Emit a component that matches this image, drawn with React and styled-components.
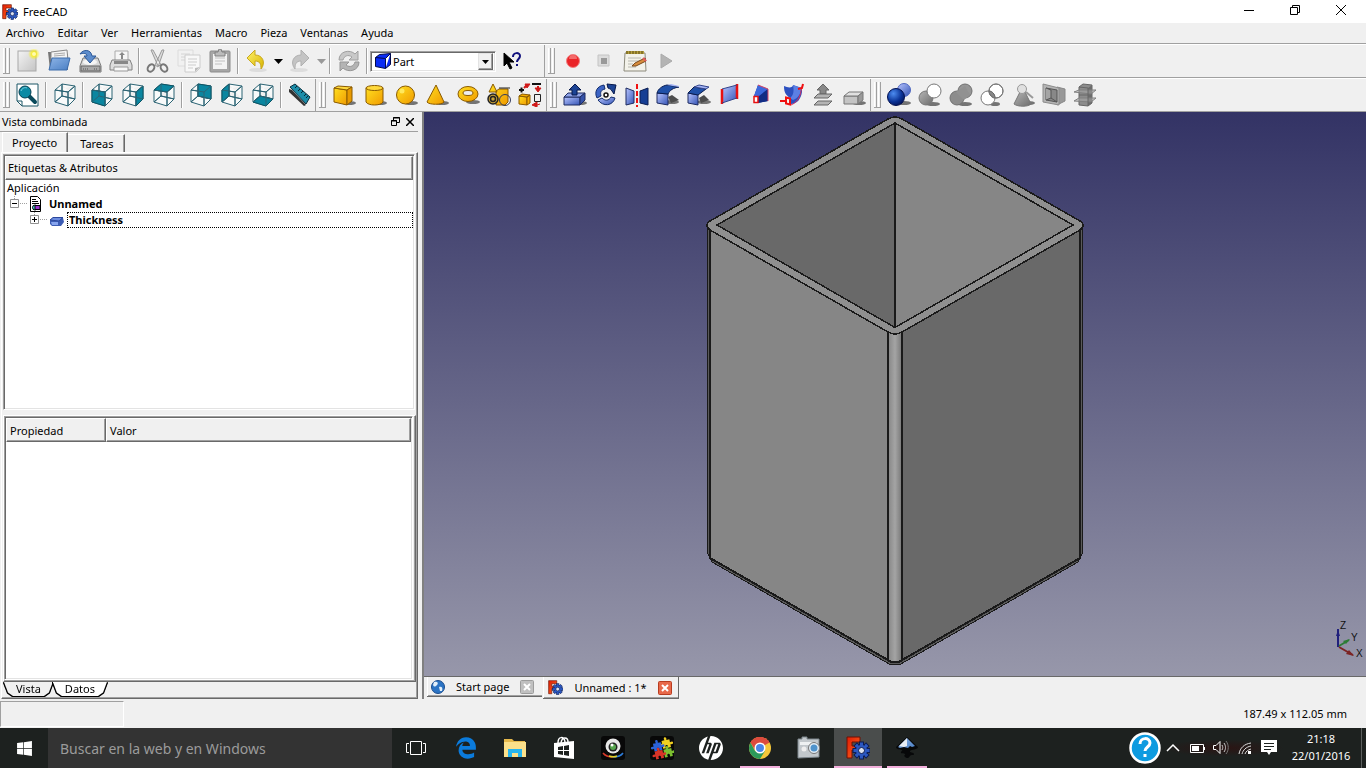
import React from 'react'
import styled, { createGlobalStyle, css } from 'styled-components'
import { FaWindows, FaEdgeLegacy } from 'react-icons/fa'
import { SiHp } from 'react-icons/si'

// css
const GlobalStyle = createGlobalStyle`
  * { box-sizing: border-box; }
  html, body { margin: 0; padding: 0; background: #f0f0f0; }
  body, button, input, select, table {
    font-family: "Noto Sans", "Open Sans", sans-serif;
    font-size: 11px;
    color: #000;
  }
  button { border: 0; padding: 0; background: none; }
  svg { display: block; flex: none; }
`

const Window = styled.div`
  min-height: 100vh;
  display: flex;
  flex-direction: column;
`

const TitleBar = styled.header`
  height: 23px;
  display: flex;
  align-items: center;
  background: #fff;
  padding: 0 2px;

  h1 {
    flex: 1;
    margin: 0;
    padding-left: 5px;
    font-size: 11px;
    font-weight: 400;
  }
`

const WindowButton = styled.button`
  align-self: flex-start;
  width: 46px;
  height: 20px;
  display: grid;
  place-items: center;
`

const MenuBar = styled.nav`
  height: 21px;
  display: flex;
  align-items: center;
  border-bottom: 1px solid #a0a0a0;

  button { padding: 0 7px 0 6px; line-height: 16px; }
`

const ToolBar = styled.div`
  height: 34px;
  display: flex;
  border-top: 1px solid #fff;
  border-bottom: 1px solid #a0a0a0;
`

const ToolGroup = styled.div`
  display: flex;
  align-items: center;
  padding-right: ${p => p.$end}px;
  border-right: ${p => (p.$last ? 0 : 1)}px solid #a0a0a0;
`

const Handle = styled.span`
  width: 7px;
  height: 26px;
  margin: 0 2px 0 3px;
  border: solid #a0a0a0;
  border-width: 0 1px 1px 0;
  background: linear-gradient(90deg, #fff 1px, #f0f0f0 1px 2px, #a0a0a0 2px 3px, #f0f0f0 3px 4px, #fff 4px 5px, #f0f0f0 5px);
`

const ToolButton = styled.button`
  width: ${p => (p.$arrow ? 12 : 31)}px;
  height: 30px;
  display: grid;
  place-items: center;
`

const Separator = styled.span`
  width: 2px;
  height: 26px;
  margin: 0 2px;
  border-left: 1px solid #a0a0a0;
  border-right: 1px solid #fff;
`

const sunken = css`
  border: 1px solid;
  border-color: #a0a0a0 #fff #fff #a0a0a0;
  box-shadow: inset 1px 1px #696969, inset -1px -1px #e3e3e3;
`

const Combo = styled.label`
  ${sunken}
  width: 126px;
  height: 21px;
  display: flex;
  align-items: center;
  padding: 2px 2px 2px 4px;
  background: #fff;

  select {
    flex: 1;
    appearance: none;
    border: 0;
    padding: 0 0 0 2px;
    background: transparent;
    outline: 0;
  }
`

const ComboArrow = styled.span`
  width: 15px;
  height: 17px;
  display: grid;
  place-items: center;
  pointer-events: none;
  background: #f0f0f0;
  border: 1px solid;
  border-color: #e3e3e3 #696969 #696969 #e3e3e3;
  box-shadow: inset -1px -1px #a0a0a0;
`

const Workspace = styled.main`
  flex: 1;
  display: flex;
  min-height: 400px;
`

const Dock = styled.aside`
  width: 418px;
  display: flex;
  flex-direction: column;
`

const DockTitle = styled.div`
  height: 20px;
  display: flex;
  align-items: center;
  gap: 1px;
  padding: 0 1px 0 2px;
  border-bottom: 1px solid #a0a0a0;

  span { flex: 1; }
  button { width: 14px; height: 14px; display: grid; place-items: center; }
`

const TopTabs = styled.div`
  display: flex;
  align-items: flex-end;
  height: 20px;
  padding-left: 2px;
`

const TopTab = styled.button`
  height: ${p => (p.$active ? 20 : 18)}px;
  padding: 0 10px 0 ${p => (p.$active ? 9 : 12)}px;
  border-top: 1px solid #fff;
  border-left: ${p => (p.$active ? 1 : 0)}px solid #fff;
  border-right: 1px solid #696969;
  box-shadow: inset -1px 0 #a0a0a0;
`

const Pane = styled.section`
  flex: 1;
  display: flex;
  flex-direction: column;
  margin-left: 1px;
  padding: 1px 1px 0 1px;
  border: 1px solid;
  border-color: #fff #696969 #696969 #fff;
  box-shadow: inset -1px -1px #a0a0a0;
`

const Tree = styled.div`
  ${sunken}
  height: 256px;
  margin-right: 1px;
  padding: 1px;
  background: #fff;

  ul { list-style: none; margin: 0; padding: 0; }
  li { line-height: 16px; }
`

const raised = css`
  background: #f0f0f0;
  border: 1px solid;
  border-color: #fff #696969 #696969 #fff;
  box-shadow: inset -1px -1px #a0a0a0;
`

const TreeHeader = styled.div`
  ${raised}
  height: 24px;
  padding-left: 2px;
  line-height: 22px;
`

const TreeRow = styled.div`
  display: flex;
  align-items: center;
  height: 16px;
  padding-left: ${p => p.$indent}px;
  font-weight: ${p => (p.$bold ? 700 : 400)};
`

const TreeLabel = styled.span`
  flex: ${p => (p.$focus ? 1 : 'none')};
  height: 16px;
  line-height: 14px;
  margin-left: ${p => (p.$focus ? 3 : 5)}px;
  padding-left: 1px;
  border: 1px ${p => (p.$focus ? 'dotted #000' : 'solid transparent')};
`

const PropertyPane = styled.div`
  flex: 1;
  display: flex;
  flex-direction: column;
  margin-top: 5px;
  padding: 0 2px 1px 0;
  border: 1px solid;
  border-color: #fff #696969 #696969 #fff;
  box-shadow: inset -1px -1px #a0a0a0;
`

const PropertyFrame = styled.div`
  ${sunken}
  flex: 1;
  padding: 1px;
  background: #fff;
`

const PropertyTable = styled.table`
  width: 100%;
  border-collapse: separate;
  border-spacing: 0;

  th {
    ${raised}
    height: 24px;
    padding: 0 3px;
    font-weight: 400;
    text-align: left;
  }
  th:first-child { width: 100px; }
`

const BottomTabs = styled.div`
  height: 16px;
  display: flex;
  padding-left: 1px;
`

const BottomTab = styled.button`
  height: 14px;
  padding: 0 12px;
  line-height: 12px;
  background: ${p => (p.$active ? '#fff' : '#f0f0f0')};
  clip-path: polygon(0 0, 100% 0, calc(100% - 4px) 75%, calc(100% - 9px) 100%, 9px 100%, 4px 75%);
`

const BottomTabEdge = styled.span`
  display: flex;
  filter: drop-shadow(0 1px #000) drop-shadow(1px 0 #000) drop-shadow(-1px 0 #000);
`

const Mdi = styled.div`
  flex: 1;
  display: flex;
  flex-direction: column;
  margin-left: 4px;
  border-left: 2px solid #808080;
`

const Viewport = styled.div`
  flex: 1;
  display: flex;
  background: linear-gradient(#333365, #9797aa);
  border-bottom: 1px solid #696969;

  svg { flex: 1; width: 100%; min-width: 0; }
`

const DocTabs = styled.div`
  height: 22px;
  display: flex;
  align-items: flex-start;
  padding-left: 3px;
`

const DocTab = styled.div`
  height: ${p => (p.$active ? 22 : 20)}px;
  display: flex;
  align-items: center;
  padding: 0 ${p => (p.$active ? 6 : 8)}px 0 ${p => (p.$active ? 5 : 4)}px;
  border: solid #696969;
  border-width: 0 ${p => (p.$active ? 1 : 0)}px 1px 0;
  box-shadow: inset 1px 0 #fff, inset 0 -1px #a0a0a0;
  margin-right: 1px;

  > button:first-of-type { margin: 0 11px; }
`

const StatusBar = styled.footer`
  height: 29px;
  display: flex;
  align-items: center;
  justify-content: space-between;
  padding-right: 19px;
`

const StatusBox = styled.span`
  width: 124px;
  height: 26px;
  border: 1px solid;
  border-color: #a0a0a0 #fff #fff #a0a0a0;
`

const TaskBar = styled.footer`
  height: 40px;
  display: flex;
  background: #1d211f;
`

const Search = styled.input`
  width: 344px;
  height: 40px;
  border: 0;
  padding: 0 12px;
  background: #333;
  font-size: 14px;

  &::placeholder { color: #9b9b9b; opacity: 1; }
`

const TaskButton = styled.button`
  width: 48px;
  height: 40px;
  display: grid;
  place-items: center;
  background: ${p => (p.$active ? '#4a4d4c' : 'transparent')};
  color: ${p => p.$color || '#fff'};
`

const Apps = styled.div`
  flex: 1;
  display: flex;
  gap: 1px;
  padding-left: 2px;

  ${TaskButton}.running {
    background-image: linear-gradient(#f3b0dc, #f3b0dc);
    background-size: 40px 2px;
    background-position: bottom;
    background-repeat: no-repeat;
  }
  ${TaskButton}.current { background-size: 100% 2px; }
`

const Tray = styled.div`
  display: flex;
  align-items: center;
  background: radial-gradient(ellipse at 40% 50%, #2b1413 0, #1d211f 30%);

  button { height: 40px; display: grid; place-items: center; }
`

const Clock = styled.time`
  width: 81px;
  margin-right: 4px;
  border-right: 1px solid #5c5f5e;
  height: 40px;
  padding-top: 2px;
  color: #fff;
  line-height: 17px;
  text-align: center;
`

// shared gradients
const Gradients = () => (
  <svg width="0" height="0" style={{ position: 'absolute' }} aria-hidden="true">
    <defs>
      {[
        ['gold', '#ffdf20', '#f09a00'],
        ['blue', '#b9c6ff', '#3353b5'],
        ['navy', '#3d6fe0', '#04186c'],
        ['grey', '#b5b5b5', '#6c6c6c'],
        ['pale', '#f4f4f4', '#c4c4c4'],
        ['sky', '#8db4e6', '#4a7fc4'],
        ['yellow', '#fff26a', '#d8b400'],
        ['ember', '#e01c04', '#ff6a20'],
      ].map(([id, a, b]) => (
        <linearGradient key={id} id={id} x1="0" y1="0" x2="1" y2="1">
          <stop offset="0" stopColor={a} />
          <stop offset="1" stopColor={b} />
        </linearGradient>
      ))}
      <radialGradient id="glow">
        <stop offset="0.2" stopColor="#fff200" />
        <stop offset="1" stopColor="#fff200" stopOpacity="0" />
      </radialGradient>
      <radialGradient id="ball" cx="0.35" cy="0.3" r="0.8">
        <stop offset="0" stopColor="#4d8cf0" />
        <stop offset="0.6" stopColor="#0a3296" />
        <stop offset="1" stopColor="#021050" />
      </radialGradient>
      <linearGradient id="fillet">
        <stop offset="0" stopColor="#868686" />
        <stop offset="0.5" stopColor="#a4a4a4" />
        <stop offset="1" stopColor="#777" />
      </linearGradient>
    </defs>
  </svg>
)

const Icon = ({ size = 24, box = 24, children }) => (
  <svg width={size} height={size} viewBox={`0 0 ${box} ${box}`} fill="none" aria-hidden="true">
    {children}
  </svg>
)

const FreeCadIcon = ({ size = 16 }) => (
  <Icon size={size}>
    <path d="M1 1h13v5H6v4h5v4H6v8H1z" fill="url(#ember)" stroke="#6c1004" />
    <g transform="translate(15.500 14.500)">
      {[0, 45, 90, 135].map(a => (
        <rect key={a} x="-2" y="-8.500" width="4" height="17" transform={`rotate(${a})`} fill="#2c58c0" stroke="#0c1c54" />
      ))}
      <circle r="6" fill="#2c58c0" stroke="#0c1c54" />
      {[0, 45, 90, 135].map(a => (
        <rect key={a} x="-1.500" y="-7.500" width="3" height="15" transform={`rotate(${a})`} fill="#2c58c0" />
      ))}
      <circle r="3" fill="#dfe4ee" stroke="#0c1c54" />
    </g>
  </Icon>
)

const cubeFaces = {
  front: '2,7 15,9 15,23 2,19',
  right: '15,9 22,3 22,16 15,23',
  top: '2,7 9,1 22,3 15,9',
  rear: '9,1 22,3 22,16 9,13',
  left: '2,7 9,1 9,13 2,19',
  bottom: '2,19 9,13 22,16 15,23',
}

const CubeIcon = ({ face }) => (
  <Icon>
    <path d="M2 7L15 9V23L2 19ZM15 9L22 3V16L15 23M2 7L9 1L22 3M9 1V13L22 16M9 13L2 19" fill="#f8fafa" stroke="#2c6474" />
    {face && <polygon points={cubeFaces[face]} fill="#0a86a0" stroke="#0d5464" />}
    <path d="M2 7L15 9V23M15 9L22 3M9 1V13L22 16M9 13L2 19" stroke="#2c6474" />
  </Icon>
)

const Shadow = ({ cx = 17, cy = 20, rx = 7, ry = 2 }) => (
  <ellipse cx={cx} cy={cy} rx={rx} ry={ry} fill="#555" opacity="0.8" />
)

const icons = {
  nuevo: <Icon>
    <rect x="2" y="2" width="18" height="20" fill="url(#pale)" stroke="#a8a8a8" />
    <circle cx="18" cy="5" r="6" fill="url(#glow)" /><circle cx="18" cy="5" r="2" fill="#fffbb0" />
  </Icon>,
  abrir: <Icon>
    <path d="M1 3h7l1 2h12v16H3z" fill="#777" />
    <path d="M4 3l16-2 1 10H4z" fill="#f4f4f4" stroke="#888" /><path d="M7 5l11-1M7 7l11-1" stroke="#aaa" />
    <path d="M5 9h18l-3 12H2z" fill="url(#sky)" stroke="#3c6cab" />
  </Icon>,
  guardar: <Icon>
    <path d="M5 9h15l3 8v6H2v-6z" fill="#d8d8d8" stroke="#777" /><path d="M3 17h19v5H3z" fill="#a9a9a9" stroke="#666" />
    <ellipse cx="12" cy="13" rx="7" ry="3" fill="#f5f5f5" /><path d="M5 20h6M16 20h4" stroke="#555" strokeDasharray="1 1" />
    <path d="M2 5C5 0 13 0 14 7h4l-6 7-6-7h3C9 4 5 4 2 5z" fill="#5c8ccc" stroke="#2c5898" />
  </Icon>,
  imprimir: <Icon>
    <path d="M6 2h13v10H6z" fill="#f6f6f6" stroke="#aaa" /><path d="M12 10V6h-2l3-3 3 3h-2v4z" fill="#888" />
    <path d="M3 11h18l2 5v5H1v-5z" fill="#ddd" stroke="#808080" /><path d="M5 12h14v3H5z" fill="#888" />
    <path d="M5 18h14v4H5z" fill="#f8f8f8" stroke="#999" />
  </Icon>,
  cortar: <Icon>
    <path d="M5 1l2 0 8 15-3 1zM18 1h-2L9 16l3 2z" fill="#dcdcdc" stroke="#999" />
    <ellipse cx="5" cy="19" rx="3" ry="4" transform="rotate(35 5 19)" stroke="#777" strokeWidth="2" />
    <ellipse cx="18" cy="19" rx="3" ry="4" transform="rotate(-35 18 19)" stroke="#777" strokeWidth="2" />
  </Icon>,
  copiar: <Icon>
    <path d="M1 1h15v16H1z" fill="#f1f1f1" stroke="#dcdcdc" /><path d="M4 5h9M4 8h5M4 11h4" stroke="#d4d4d4" />
    <path d="M8 6h15v13l-4 4H8z" fill="#f8f8f8" stroke="#ccc" /><path d="M11 10h9M11 13h9M11 16h8M11 19h5" stroke="#ccc" />
    <path d="M23 18l-5 5v-4z" fill="#bbb" />
  </Icon>,
  pegar: <Icon>
    <rect x="2" y="2" width="20" height="21" rx="1" fill="#a6a6a6" stroke="#8c8c8c" />
    <path d="M5 5h14v15H5z" fill="#f3f3f3" /><path d="M7 9h10M7 12h10M7 15h7" stroke="#c0c0c0" />
    <path d="M7 3h3l1-3h2l1 3h3v4H7z" fill="#bbb" stroke="#808080" />
  </Icon>,
  deshacer: <Icon>
    <ellipse cx="13" cy="21" rx="9" ry="2" fill="#ddd" />
    <path d="M2 9l8-8v5c8 0 11 8 6 14 0-5-1-8-6-8v5z" fill="url(#yellow)" stroke="#c8a820" />
  </Icon>,
  rehacer: <Icon>
    <ellipse cx="11" cy="21" rx="9" ry="2" fill="#ddd" />
    <path d="M21 9l-8-8v5C5 6 2 14 7 20c0-5 1-8 6-8v5z" fill="#c4c4c4" stroke="#b0b0b0" />
  </Icon>,
  flecha: <Icon size={9} box={9}><path d="M0 2h9L4.500 7z" fill="#000" /></Icon>,
  flechaGris: <Icon size={9} box={9}><path d="M0 2h9L4.500 7z" fill="#999" /></Icon>,
  refrescar: <Icon>
    <path d="M2 11C2 2 13 0 18 5l3-3v9h-9l3-3C11 5 7 7 6 11z" fill="#c8c8c8" stroke="#a0a0a0" />
    <path d="M22 13c0 9-11 11-16 6l-3 3v-9h9l-3 3c4 3 8 1 9-3z" fill="#b4b4b4" stroke="#969696" />
  </Icon>,
  ayuda: <Icon size={20} box={20}>
    <path d="M2 2v13l3-3 3 6 2-1-3-6h5z" fill="#000" stroke="#000" />
    <path d="M11 6c0-5 7-5 7-1 0 3-3 3-3 6M15 13v2" stroke="#10107c" strokeWidth="2" />
  </Icon>,
  grabar: <Icon><circle cx="12" cy="12" r="6.500" fill="#ea2428" stroke="#f28080" /><path d="M8 10a4 4 0 018 0z" fill="#f46a6a" /></Icon>,
  parar: <Icon><path d="M6 6h11v11H6z" fill="#ddd" stroke="#c4c4c4" /><path d="M9 9h6v6H9z" fill="#999" /></Icon>,
  macro: <Icon>
    <path d="M2 4h20l1 18H1z" fill="#f3f2ea" stroke="#8c8a7c" /><path d="M3 2h18v3H3z" fill="#b5a040" /><path d="M4 2v3M7 2v3M10 2v3M13 2v3M16 2v3M19 2v3" stroke="#5a4a10" />
    <path d="M5 9h13M5 12h12M5 15h5M5 18h8" stroke="#b8b8b0" />
    <path d="M9 17l3-3 10-5 1 3-10 5z" fill="#d88d3c" stroke="#7a4a1c" /><path d="M20 9l3 3" stroke="#e35b60" strokeWidth="2" />
  </Icon>,
  ejecutar: <Icon><path d="M7 5l11 7-11 7z" fill="#b4b4b4" stroke="#aaa" /></Icon>,
  ajustar: <Icon>
    <path d="M1 1h21v22H6l-5-5z" fill="#fff" stroke="#1c5666" /><path d="M1 18h5v5" stroke="#1c5666" />
    <path d="M13 13l6 6" stroke="#0a4a5c" strokeWidth="4" strokeLinecap="round" />
    <circle cx="9" cy="9" r="6" fill="#0a8aa4" stroke="#073f50" /><path d="M5 8c1-3 4-4 6-3" stroke="#7fd0e0" />
  </Icon>,
  medir: <Icon>
    <path d="M1 6l3 1 14 15-2 1L1 9z" fill="#333" /><path d="M2 4L7 1l15 13-4 7z" fill="#1c8ca8" stroke="#0a2e3c" />
    <path d="M9 3L7 5M12 6l-2 2M15 8l-2 2M18 11l-2 2M20 13l-2 2" stroke="#062836" />
  </Icon>,
  caja: <Icon>
    <Shadow cx={17} /><path d="M2 5l13 2v15L2 19z" fill="url(#gold)" stroke="#8a5a00" />
    <path d="M2 5l4-2 14 1-5 3z" fill="#ffd93c" stroke="#8a5a00" /><path d="M15 7l5-3v14l-5 4z" fill="#e89a00" stroke="#8a5a00" />
  </Icon>,
  cilindro: <Icon>
    <Shadow /><path d="M3 5v14c2 4 15 4 17 0V5z" fill="url(#gold)" stroke="#8a5a00" /><ellipse cx="11.500" cy="5" rx="8.500" ry="2.500" fill="#ffd93c" stroke="#8a5a00" />
  </Icon>,
  esfera: <Icon><Shadow /><circle cx="11.500" cy="12" r="9" fill="url(#gold)" stroke="#8a5a00" /><circle cx="8" cy="8" r="2.500" fill="#fff070" opacity="0.8" /></Icon>,
  cono: <Icon><Shadow /><path d="M11 2l8 17c-2 3-15 3-17 0z" fill="url(#gold)" stroke="#8a5a00" /></Icon>,
  toro: <Icon>
    <Shadow cy={19} /><ellipse cx="12" cy="11" rx="10" ry="7.500" fill="url(#gold)" stroke="#8a5a00" />
    <ellipse cx="12" cy="10" rx="5" ry="2.500" fill="#eee" stroke="#8a5a00" />
  </Icon>,
  primitivas: <Icon>
    <path d="M6 1l4 8H2zM9 8l3-2h9v13l-3 3H9z" fill="url(#gold)" stroke="#8a5a00" /><path d="M12 5h11" stroke="#222" />
    <circle cx="6" cy="16" r="5" fill="#c9a33a" stroke="#222" strokeWidth="1.500" /><circle cx="6" cy="16" r="2.500" stroke="#222" strokeWidth="1.500" /><circle cx="18" cy="17" r="5.500" stroke="#333a5c" />
  </Icon>,
  constructor: <Icon>
    <path d="M1 13l8 1v8l-8-1z" fill="url(#gold)" stroke="#8a5a00" /><path d="M1 13l3-2 8 1-3 2zM9 14l3-2v8l-3 2z" fill="#f4ac00" stroke="#8a5a00" />
    <path d="M1 7h5M3.500 4.500v5" stroke="#111" strokeWidth="2" /><path d="M14 1h9" stroke="#111" strokeWidth="2" /><path d="M16.500 11.500h6v7h-6z" stroke="#222" />
    <path d="M6 5l3-3M20 3v3" stroke="#d01818" strokeWidth="2" />
    <path d="M7 1h5l-3 4zM17 5h6l-3 4zM19 19v5l-5-2zM19 22l3-1" fill="#d01818" stroke="#d01818" />
  </Icon>,
  extruir: <Icon>
    <Shadow /><path d="M1 14h16v8H1z" fill="url(#blue)" stroke="#1c2a60" /><path d="M1 14l4-4h17l-5 4z" fill="#90a4e8" stroke="#1c2a60" /><path d="M17 14l5-4v7l-5 5z" fill="#3552a8" stroke="#1c2a60" />
    <path d="M9 12V7H6l6-6 6 6h-4v5z" fill="#1c4494" stroke="#06184c" />
  </Icon>,
  revolucion: <Icon>
    <path d="M10 2C3 3 0 9 3 15l4-2c-1-4 0-6 4-7z" fill="#3c64c4" stroke="#122c6c" /><path d="M4 17c5 7 15 6 17-2l-4-1c-2 4-6 4-9 1z" fill="url(#blue)" stroke="#122c6c" />
    <path d="M13 1l9 1-2 9-2-3c-1-2-2-2-4-3z" fill="#1c4494" stroke="#06184c" /><circle cx="12" cy="12" r="2" fill="#fff" stroke="#111" strokeWidth="1.500" />
  </Icon>,
  simetria: <Icon>
    <path d="M1 5l8 3v12l-8 2z" fill="url(#blue)" stroke="#1c2a60" /><path d="M23 5l-8 3v12l8 2z" fill="#163e94" stroke="#0a1c50" />
    <path d="M12 1v23" stroke="#f01010" strokeWidth="2" strokeDasharray="5 2" />
  </Icon>,
  redondeo: <Icon>
    <Shadow cx={16} cy={19} /><path d="M1 10l11 1v11L1 20z" fill="url(#blue)" stroke="#1c2a60" />
    <path d="M1 10C2 6 6 3 11 2l12 2c-6 1-9 3-11 7z" fill="#1f50a8" stroke="#091c50" /><path d="M11 2l4-1 8 2v1z" fill="#a3b3f4" /><path d="M12 14l4-2 7 5-8 3z" fill="#4c4c4c" />
  </Icon>,
  chaflan: <Icon>
    <Shadow cx={17} cy={19} /><path d="M1 10l10 2v10L1 20z" fill="url(#blue)" stroke="#1c2a60" />
    <path d="M1 10l6-6 12 2-8 6z" fill="#1f50a8" stroke="#091c50" /><path d="M7 4l5-2 10 2-3 2z" fill="#a3b3f4" stroke="#33458c" /><path d="M12 15l5-3 5 5-8 3z" fill="#4c4c4c" />
  </Icon>,
  regla: <Icon><path d="M4 6l15-4v13L4 20z" fill="url(#blue)" /><path d="M4 6v15M19 1v15" stroke="#e81010" strokeWidth="2.500" /><path d="M4 6l15-4M4 20l15-5" stroke="#33458c" /></Icon>,
  puente: <Icon>
    <path d="M5 13L9 2l10 4v12L9 20z" fill="#1c3ca4" /><path d="M9 2l10 4-10 8-4-1z" fill="#3c68dc" /><path d="M9 14l10-8v12L9 20z" fill="#122c84" />
    <path d="M9 2l10 4v12" stroke="#d84868" /><path d="M5 13.500h4v6H5z" fill="#fff" stroke="#e81010" strokeWidth="1.500" />
  </Icon>,
  barrido: <Icon>
    <path d="M4 3c0 7 2 9 6 12l1 6c6 0 10-5 11-12V5L13 2C13 5 8 5 4 3z" fill="#2c50c0" /><path d="M13 2l8 3c0 6-3 10-8 12l-3-2c4-3 4-8 3-13z" fill="#5c80e4" />
    <path d="M23 1l-2 7c-1 7-5 12-10 14" stroke="#d8305c" /><path d="M0 18h7M6 14.500l4 1v6l-4-1zM18 6l4-1 1-4" stroke="#f01010" strokeWidth="2" />
  </Icon>,
  desfase: <Icon><path d="M9 11V7H6l6-6 6 6h-3v4z" fill="#888" stroke="#666" /><path d="M7 11h14l-4 4H3zM7 18h14l-4 4H3z" fill="#b4b4b4" stroke="#666" /></Icon>,
  espesor: <Icon>
    <Shadow cx={17} /><path d="M2 13h14v8H2z" fill="#c4c4c4" stroke="#777" /><path d="M2 13l5-4h14l-5 4z" fill="#e0e0e0" stroke="#777" /><path d="M16 13l5-4v8l-5 4z" fill="#999" stroke="#777" />
  </Icon>,
  booleana: <Icon><Shadow /><circle cx="17" cy="7" r="6.500" fill="url(#blue)" stroke="#5068c0" /><circle cx="9" cy="14" r="8.500" fill="url(#ball)" stroke="#021050" /></Icon>,
  cortarPieza: <Icon><Shadow cx={15} cy={21} /><circle cx="8" cy="15" r="7" fill="url(#grey)" stroke="#777" /><circle cx="16" cy="8" r="7" fill="#fff" stroke="#777" /></Icon>,
  union: <Icon><Shadow cx={16} cy={21} /><circle cx="16" cy="8" r="7" fill="#969696" stroke="#707070" /><circle cx="8" cy="15" r="7" fill="#8c8c8c" stroke="#707070" /><path d="M7 9l9-6 5 9-6 5z" fill="#919191" /></Icon>,
  interseccion: <Icon>
    <Shadow cx={15} cy={21} rx={5} /><circle cx="16" cy="8" r="7" fill="#fff" stroke="#777" /><circle cx="8" cy="15" r="7" fill="#fff" stroke="#777" />
    <path d="M9 8c3 0 6 3 6 7-3 0-6-3-6-7z" fill="#888" stroke="#666" /><circle cx="16" cy="8" r="7" stroke="#777" />
  </Icon>,
  revisar: <Icon>
    <Shadow /><path d="M9 9l5 0 6 12c-3 3-13 3-17 0z" fill="url(#grey)" stroke="#777" /><circle cx="11" cy="6" r="4.500" fill="#e0e0e0" stroke="#999" /><path d="M15 9l7 6" stroke="#999" strokeWidth="2" />
  </Icon>,
  seccion: <Icon>
    <path d="M15 4l8 2v12l-8 4z" fill="#999" stroke="#888" /><path d="M1 1l16 4v17L1 19z" fill="#b4b4b4" stroke="#8c8c8c" /><path d="M4 5l11 2v12l-11-2z" fill="#888" stroke="#555" /><path d="M4 5l5 2v8l-5 2M9 15l6 4" fill="#a4a4a4" stroke="#555" />
  </Icon>,
  secciones: <Icon>
    <path d="M6 4l4-3 9 1v18l-4 3-9-1z" fill="#8c8c8c" stroke="#666" /><path d="M15 5l4-3v18l-4 3z" fill="#6c6c6c" />
    <path d="M1 9l5-2h17l-5 4zM1 18l5-3h17l-5 4z" fill="#aaa" fillOpacity="0.500" stroke="#808080" /><path d="M6 4l9 1v18M6 12h9" stroke="#666" />
  </Icon>,
}

const Tool = ({ name, label }) => <ToolButton aria-label={label || name}>{icons[name]}</ToolButton>

const Tools = ({ names }) => names.map((n, i) => (
  n === '|' ? <Separator key={i} /> : <Tool key={n} name={n} />
))

const solids = ['caja', 'cilindro', 'esfera', 'cono', 'toro', 'primitivas', 'constructor']
const partTools = ['extruir', 'revolucion', 'simetria', 'redondeo', 'chaflan', 'regla', 'puente', 'barrido', 'desfase', 'espesor']
const booleans = ['booleana', 'cortarPieza', 'union', 'interseccion', 'revisar', 'seccion', 'secciones']
const menus = ['Archivo', 'Editar', 'Ver', 'Herramientas', 'Macro', 'Pieza', 'Ventanas', 'Ayuda']

const View = ({ face }) => <ToolButton aria-label={face || 'axonometrica'}><CubeIcon face={face} /></ToolButton>

const Expander = ({ open }) => (
  <svg width="20" height="16" viewBox="0 0 20 16" fill="none">
    <path d="M4.500 0v3M10 7.500h8" stroke="#a0a0a0" strokeDasharray="1 1" />
    <path d="M.5 3.500h8v8h-8z" fill="#fff" stroke="#919191" />
    <path d={open ? 'M2 7.500h5' : 'M2 7.500h5M4.500 5v5'} stroke="#000" />
  </svg>
)

const CloseBox = ({ color, edge }) => (
  <Icon size={14} box={14}>
    <rect x="0.500" y="0.500" width="13" height="13" rx="1" fill={color} stroke={edge} />
    <path d="M4 4l6 6M10 4l-6 6" stroke="#fff" strokeWidth="2" />
  </Icon>
)

// hollow box with rounded outer edges
const Model = () => (
  <svg viewBox="424 112 942 564" preserveAspectRatio="xMidYMid meet" fill="none" role="img" aria-label="Thickness">
    <g shapeRendering="crispEdges">
      <path d="M707.500 225V553L712 562L890 664.500H900L1078 562L1082.500 553V225L895 300Z" fill="#5a5a5a" stroke="#1a1a1a" />
      <path d="M710.500 225V558L888 660V320Z" fill="#868686" />
      <path d="M1079.500 225V558L902 660V320Z" fill="#696969" />
      <path d="M888 320h14v341c-3 2-11 2-14 0z" fill="url(#fillet)" />
      <path d="M710 226V558L888 660M1080 226V558L902 660M888 330V661M902 330V661M888 660c3 3 11 3 14 0" stroke="#1a1a1a" strokeWidth="2" />
      <path d="M707 225Q707 223 710 221L888 119Q895 115 902 119L1080 221Q1083 223 1083 225Q1083 228 1080 230L902 332Q895 336 888 332L710 230Q707 228 707 225Z" fill="#8f8f8f" stroke="#1a1a1a" strokeWidth="1.500" />
      <path d="M717 225L895 123V327.500Z" fill="#696969" />
      <path d="M1073 225L895 123V327.500Z" fill="#868686" />
      <path d="M717 225L895 123L1073 225L895 327.500ZM895 123V328" stroke="#1a1a1a" strokeWidth="1.500" />
    </g>
    <g strokeWidth="2">
      <path d="M1338 647V629" stroke="#20207c" /><path d="M1336 636l2-6 2 6z" fill="#20207c" />
      <path d="M1339 646l10-6" stroke="#2c7c34" /><path d="M1343 641l7-2-4 5z" fill="#2c7c34" />
      <path d="M1339 647l14 8" stroke="#7c2424" /><path d="M1349 650l5 6-8-2z" fill="#7c2424" />
    </g>
    <g fill="#111" fontFamily="Liberation Sans, sans-serif" fontSize="10">
      <text x="1340" y="629">Z</text>
      <text x="1351" y="641">Y</text>
      <text x="1356" y="657">X</text>
    </g>
  </svg>
)

const puzzle = 'M1 2h3q-1-3 1-3t1 3h3v3q3-1 3 1t-3 1v3H6q1-3-1-3t-1 3H1V7q-3 1-3-1t3-1z'

const apps = [
  { name: 'Microsoft Edge', color: '#0b7bdc', icon: <FaEdgeLegacy size={22} /> },
  { name: 'Explorador', icon: <Icon>
    <path d="M1 3h8l2 2h11v16H1z" fill="#e6b94c" /><path d="M1 6h22v15H1z" fill="#fbe08a" /><path d="M5 21v-8h14v8h-4v-4H9v4z" fill="#27b5ee" />
  </Icon> },
  { name: 'Tienda', icon: <Icon>
    <path d="M2 7l20-2v18L2 21z" fill="#fff" /><path d="M6 7c0-7 6-7 7-1M9 7c1-7 7-6 7-1" stroke="#fff" strokeWidth="1.500" />
    <path d="M6 11l5-1v4H6zM12 10l5-1v5h-5zM6 15h5v4l-5-1zM12 15h5v5l-5-1z" fill="#1d211f" />
  </Icon> },
  { name: 'Camara web', icon: <Icon>
    <rect width="24" height="24" rx="3" fill="#080808" /><circle cx="12" cy="10" r="7.500" fill="#e8e8e8" /><circle cx="12" cy="11" r="4.500" fill="#222" /><circle cx="12" cy="11" r="3" fill="#55a44c" /><circle cx="11" cy="9" r="1.500" fill="#fff" />
    <path d="M2 17c3 4 7 4 10 4" stroke="#d83a2c" strokeWidth="1.500" /><path d="M12 21c4 0 8-1 10-4" stroke="#2c7cd8" strokeWidth="1.500" /><path d="M8 20c3 1 6 1 8 0" stroke="#e0d028" strokeWidth="1.500" />
  </Icon> },
  { name: 'Juegos', icon: <Icon>
    <rect width="24" height="24" rx="3" fill="#080808" />
    <g transform="rotate(-12 12 12)">
      <path d={puzzle} transform="translate(12 3)" fill="#f0d020" />
      <path d={puzzle} transform="translate(3 4)" fill="#2c62d8" />
      <path d={puzzle} transform="translate(12 12)" fill="#7cc030" />
      <path d={puzzle} transform="translate(3 12)" fill="#d83428" />
    </g>
  </Icon> },
  { name: 'HP', icon: <SiHp size={24} /> },
  { name: 'Chrome', cls: 'running', icon: <Icon>
    <circle cx="12" cy="12" r="11" fill="#f5c73a" /><path d="M12 12L2.500 6.500A11 11 0 0 1 21.500 6.500Z" fill="#dc4b3e" /><path d="M12 6.500H21.500A11 11 0 0 0 2.500 6.500L7 14Z" fill="#dc4b3e" />
    <path d="M2.500 6.500A11 11 0 0 0 12 23L17 15L12 17L7 15Z" fill="#2b9a5b" /><circle cx="12" cy="12" r="5.500" fill="#fff" /><circle cx="12" cy="12" r="4" fill="#4a86e8" />
  </Icon> },
  { name: 'Fotos', icon: <Icon>
    <path d="M1 3h4V1h5v2h12v18L1 22z" fill="#c2c8cc" stroke="#7c868c" /><path d="M3 6h17v3H3z" fill="#eef1f2" /><circle cx="17" cy="12" r="5.500" fill="#e3eef7" stroke="#777" /><circle cx="17" cy="12" r="3.500" fill="#4f93cc" /><circle cx="7" cy="13" r="2.500" fill="#eee" />
  </Icon> },
  { name: 'FreeCAD', active: true, cls: 'running current', icon: <FreeCadIcon size={24} /> },
  { name: 'Inkscape', cls: 'running', icon: <Icon>
    <path d="M12 1l11 10c0 3-7 2-8 4s4 1 4 3-3 0-4 2-3 3-5 1 1-2 0-3-5 0-4-2 2-1 1-2-6 0-6-3z" fill="#070809" /><path d="M12 2l8 8-3 1-2-1-2 2-4-1-4 1-2-1z" fill="url(#sky)" /><path d="M12 2L4 10l5 1 3-1z" fill="#e8edf4" />
  </Icon> },
]

const App = () => (
  <Window>
    <GlobalStyle />
    <Gradients />

    <TitleBar>
      <FreeCadIcon />
      <h1>FreeCAD</h1>
      <WindowButton aria-label="Minimizar"><Icon size={10} box={10}><path d="M0 5.500h10" stroke="#000" /></Icon></WindowButton>
      <WindowButton aria-label="Restaurar"><Icon size={10} box={10}><path d="M.5 2.500h7v7h-7zM2.500 2.500v-2h7v7h-2" stroke="#000" /></Icon></WindowButton>
      <WindowButton aria-label="Cerrar"><Icon size={10} box={10}><path d="M0 0l10 10M10 0L0 10" stroke="#000" /></Icon></WindowButton>
    </TitleBar>

    <MenuBar>
      {menus.map(m => <button key={m}>{m}</button>)}
    </MenuBar>

    <ToolBar>
      <ToolGroup $end={17}>
        <Handle />
        <Tools names={['nuevo', 'abrir', 'guardar', 'imprimir', '|', 'cortar', 'copiar', 'pegar', '|', 'deshacer']} />
        <ToolButton $arrow aria-label="Lista deshacer">{icons.flecha}</ToolButton>
        <Tool name="rehacer" />
        <ToolButton $arrow aria-label="Lista rehacer">{icons.flechaGris}</ToolButton>
        <Tools names={['|', 'refrescar', '|']} />
        <Combo>
          <Icon size={16} box={16}>
            <path d="M.5 4.500l10 1v10l-10-2zM.5 4.500l4-3 11-1-5 5M15.500.5v11l-5 4" fill="#0a2cf4" stroke="#020a4c" />
          </Icon>
          <select aria-label="Banco de trabajo" defaultValue="Part"><option>Part</option></select>
          <ComboArrow><Icon size={7} box={7}><path d="M0 2h7L3.500 6z" fill="#000" /></Icon></ComboArrow>
        </Combo>
        <Tool name="ayuda" />
      </ToolGroup>
      <ToolGroup $last>
        <Handle />
        <Tools names={['grabar', 'parar', 'macro', 'ejecutar']} />
      </ToolGroup>
    </ToolBar>

    <ToolBar>
      <ToolGroup $end={0}>
        <Handle />
        <Tool name="ajustar" />
        <Separator />
        <View />
        <Separator />
        <View face="front" /><View face="right" /><View face="top" />
        <Separator />
        <View face="rear" /><View face="left" /><View face="bottom" />
        <Separator />
        <Tool name="medir" />
      </ToolGroup>
      <ToolGroup $end={1}><Handle /><Tools names={solids} /></ToolGroup>
      <ToolGroup $end={1}><Handle /><Tools names={partTools} /></ToolGroup>
      <ToolGroup $last><Handle /><Tools names={booleans} /></ToolGroup>
    </ToolBar>

    <Workspace>
      <Dock>
        <DockTitle>
          <span>Vista combinada</span>
          <button aria-label="Flotar"><Icon size={9} box={9}><path d="M.5 3.500h5v5h-5zM2.500 3V.5h6v5H6M2 1h7M0 4h6" stroke="#000" /></Icon></button>
          <button aria-label="Cerrar panel"><Icon size={8} box={8}><path d="M0 0l8 8M8 0L0 8" stroke="#000" strokeWidth="1.500" /></Icon></button>
        </DockTitle>
        <TopTabs>
          <TopTab $active>Proyecto</TopTab>
          <TopTab>Tareas</TopTab>
        </TopTabs>
        <Pane>
          <Tree>
            <TreeHeader>Etiquetas &amp; Atributos</TreeHeader>
            <ul>
              <li>
                <TreeRow $indent={2}>Aplicación</TreeRow>
                <ul>
                  <li>
                    <TreeRow $indent={5} $bold>
                      <Expander open />
                      <svg width="12" height="16" viewBox="0 0 12 16" fill="none">
                        <path d="M.5.5h7l3 3v12h-10z" fill="#fff" stroke="#000" /><path d="M2 3.500h4M2 5.500h6M2 7.500h7" stroke="#000" />
                        <circle cx="5" cy="11.500" r="2.500" fill="#4cc" stroke="#000" /><path d="M5 9.500h5v4H5z" fill="#93c" stroke="#000" />
                      </svg>
                      <TreeLabel>Unnamed</TreeLabel>
                    </TreeRow>
                    <ul>
                      <li>
                        <TreeRow $indent={25} $bold>
                          <Expander />
                          <svg width="14" height="14" viewBox="0 0 14 14" fill="none">
                            <path d="M0 7l3-2h10l1 4-3 4H2l-2-2z" fill="#3c5cb4" /><path d="M0 7l3-2.500h10L9 8z" fill="#6c8ce0" stroke="#2c489c" /><path d="M1 9h7v3H2z" fill="#86a4ee" />
                          </svg>
                          <TreeLabel $focus>Thickness</TreeLabel>
                        </TreeRow>
                      </li>
                    </ul>
                  </li>
                </ul>
              </li>
            </ul>
          </Tree>
          <PropertyPane>
            <PropertyFrame>
              <PropertyTable>
                <thead>
                  <tr><th>Propiedad</th><th>Valor</th></tr>
                </thead>
              </PropertyTable>
            </PropertyFrame>
          </PropertyPane>
          <BottomTabs>
            <BottomTabEdge><BottomTab>Vista</BottomTab></BottomTabEdge>
            <BottomTabEdge><BottomTab $active>Datos</BottomTab></BottomTabEdge>
          </BottomTabs>
        </Pane>
      </Dock>

      <Mdi>
        <Viewport><Model /></Viewport>
        <DocTabs>
          <DocTab>
            <Icon size={14} box={14}>
              <circle cx="7" cy="7" r="6.500" fill="#2c74c4" stroke="#1c4c8c" /><path d="M3 2c3-1 5 1 3 3S3 7 2 5zM8 7c3-1 4 1 3 4H9z" fill="#e4f0fa" />
            </Icon>
            <button>Start page</button>
            <button aria-label="Cerrar Start page"><CloseBox color="#c0c0c0" edge="#9c9c9c" /></button>
          </DocTab>
          <DocTab $active>
            <FreeCadIcon size={15} />
            <button>Unnamed : 1*</button>
            <button aria-label="Cerrar Unnamed"><CloseBox color="#e8694a" edge="#b83c20" /></button>
          </DocTab>
        </DocTabs>
      </Mdi>
    </Workspace>

    <StatusBar>
      <StatusBox />
      <span>187.49 x 112.05 mm</span>
    </StatusBar>

    <TaskBar>
      <TaskButton aria-label="Inicio"><FaWindows size={17} /></TaskButton>
      <Search placeholder="Buscar en la web y en Windows" aria-label="Buscar" />
      <TaskButton aria-label="Vista de tareas">
        <Icon size={20} box={20}><path d="M4.500 3.500h11v13h-11zM3 5.500H.5v9H3M17 5.500h2.500v9H17" stroke="#fff" /></Icon>
      </TaskButton>
      <Apps>
        {apps.map(a => (
          <TaskButton key={a.name} aria-label={a.name} className={a.cls} $active={a.active} $color={a.color}>{a.icon}</TaskButton>
        ))}
      </Apps>
      <Tray>
        <button aria-label="Ayuda">
          <Icon size={32} box={32}>
            <circle cx="16" cy="16" r="14.500" fill="#0d9be0" stroke="#fff" strokeWidth="2.500" />
            <path d="M11 12c0-7 10-7 10-1 0 4-5 4-5 8M16 22v3" stroke="#fff" strokeWidth="3" />
          </Icon>
        </button>
        <button aria-label="Iconos ocultos"><Icon><path d="M6 15l6-6 6 6" stroke="#fff" strokeWidth="1.500" /></Icon></button>
        <button aria-label="Bateria">
          <Icon><path d="M5.500 8.500h13v8h-13zM19.500 11v3" stroke="#fff" /><path d="M7 10h7v5H7z" fill="#fff" /></Icon>
        </button>
        <button aria-label="Volumen">
          <Icon><path d="M4.500 9.500H7l4-4v12l-4-4H4.500z" stroke="#fff" /><path d="M13 9c1 2 1 3 0 5M15 7c2 3 2 6 0 9" stroke="#ccc" /><path d="M17 5c3 4 3 9 0 13" stroke="#777" /></Icon>
        </button>
        <button aria-label="Red">
          <Icon><path d="M6 18C7 12 11 8 18 7M9 18c1-4 4-7 9-8M12 18c1-3 3-4 6-5" stroke="#ddd" /><path d="M15 15h3v3h-3z" fill="#fff" /></Icon>
        </button>
        <button aria-label="Notificaciones">
          <Icon><path d="M4 4h16v12h-6l-2 3-2-3H4z" fill="#fff" /><path d="M7 7.500h10M7 10.500h10M7 13.500h7" stroke="#1d211f" /></Icon>
        </button>
        <Clock>21:18<br />22/01/2016</Clock>
      </Tray>
    </TaskBar>
  </Window>
)

export default App
